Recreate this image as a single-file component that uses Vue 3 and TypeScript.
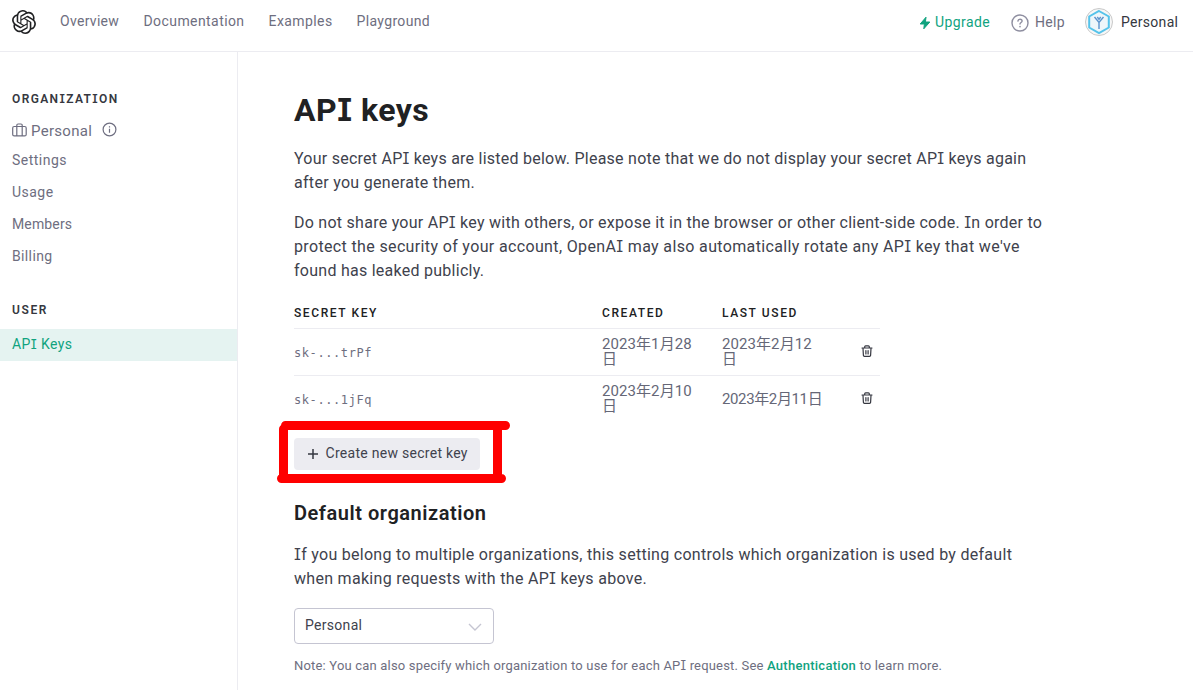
<script setup lang="ts">
interface NavLink { label: string; cls: string }
interface SecretKey { token: string; created: string; lastUsed: string; compact: boolean }

const nav: NavLink[] = [
  { label: 'Overview', cls: 'w-overview' },
  { label: 'Documentation', cls: 'w-docs' },
  { label: 'Examples', cls: 'w-examples' },
  { label: 'Playground', cls: 'w-play' },
]
const orgLinks: string[] = ['Settings', 'Usage', 'Members', 'Billing']
const keys: SecretKey[] = [
  { token: 'sk-...trPf', created: '2023年1月28日', lastUsed: '2023年2月12日', compact: false },
  { token: 'sk-...1jFq', created: '2023年2月10日', lastUsed: '2023年2月11日', compact: true },
]
</script>

<template>
  <div class="page">
    <header class="topbar">
      <svg class="logo" viewBox="0 0 24 24" width="24" height="24"><path fill="#202123" d="M22.2819 9.8211a5.9847 5.9847 0 0 0-.5157-4.9108 6.0462 6.0462 0 0 0-6.5098-2.9A6.0651 6.0651 0 0 0 4.9807 4.1818a5.9847 5.9847 0 0 0-3.9977 2.9 6.0462 6.0462 0 0 0 .7427 7.0966 5.98 5.98 0 0 0 .511 4.9107 6.051 6.051 0 0 0 6.5146 2.9001A5.9847 5.9847 0 0 0 13.2599 24a6.0557 6.0557 0 0 0 5.7718-4.2058 5.9894 5.9894 0 0 0 3.9977-2.9001 6.0557 6.0557 0 0 0-.7475-7.0729zm-9.022 12.6081a4.4755 4.4755 0 0 1-2.8764-1.0408l.1419-.0804 4.7783-2.7582a.7948.7948 0 0 0 .3927-.6813v-6.7369l2.02 1.1686a.071.071 0 0 1 .038.052v5.5826a4.504 4.504 0 0 1-4.4945 4.4944zm-9.6607-4.1254a4.4708 4.4708 0 0 1-.5346-3.0137l.142.0852 4.783 2.7582a.7712.7712 0 0 0 .7806 0l5.8428-3.3685v2.3324a.0804.0804 0 0 1-.0332.0615L9.74 19.9502a4.4992 4.4992 0 0 1-6.1408-1.6464zM2.3408 7.8956a4.485 4.485 0 0 1 2.3655-1.9728V11.6a.7664.7664 0 0 0 .3879.6765l5.8144 3.3543-2.0201 1.1685a.0757.0757 0 0 1-.071 0l-4.8303-2.7865A4.504 4.504 0 0 1 2.3408 7.872zm16.5963 3.8558L13.1038 8.364 15.1192 7.2a.0757.0757 0 0 1 .071 0l4.8303 2.7913a4.4944 4.4944 0 0 1-.6765 8.1042v-5.6772a.79.79 0 0 0-.407-.667zm2.0107-3.0231l-.142-.0852-4.7735-2.7818a.7759.7759 0 0 0-.7854 0L9.409 9.2297V6.8974a.0662.0662 0 0 1 .0284-.0615l4.8303-2.7866a4.4992 4.4992 0 0 1 6.6802 4.66zM8.3065 12.863l-2.02-1.1638a.0804.0804 0 0 1-.038-.0567V6.0742a4.4992 4.4992 0 0 1 7.3757-3.4537l-.142.0805L8.704 5.459a.7948.7948 0 0 0-.3927.6813zm1.0976-2.3654l2.602-1.4998 2.6069 1.4998v2.9994l-2.5974 1.4997-2.6067-1.4997Z" /></svg>
      <nav class="nav"><a v-for="n in nav" :key="n.label" :class="n.cls">{{ n.label }}</a></nav>
      <div class="account">
        <svg class="bolt" viewBox="0 0 12 14" width="12" height="14"><path fill="#10a37f" stroke="#10a37f" stroke-width="1" stroke-linejoin="round" d="M7 1.200 1.200 8h4.200l-.6 4.800L10.800 6H6.400z" /></svg>
        <a class="upgrade">Upgrade</a>
        <svg class="help-icon" viewBox="0 0 18 18" width="18" height="18" fill="none" stroke="#8e8ea0" stroke-width="1.4" stroke-linecap="round"><circle cx="9" cy="9" r="8" /><path d="M6.9 7.1c.1-1.2 1-1.9 2.1-1.9s2.1.7 2.1 1.8c0 1.4-2.1 1.6-2.1 3.1" /><path d="M9 12.6v.1" stroke-width="1.6" /></svg>
        <a class="help">Help</a>
        <svg class="avatar" viewBox="0 0 28 28" width="28" height="28" fill="none"><circle cx="14" cy="14" r="13.5" fill="#f7f7f7" stroke="#c8c8c8" /><path d="M14 3 23.800 8.500v11L14 25l-9.800-5.500v-11z" stroke="#55c3ea" stroke-width="2" fill="#eef6fa" /><path d="M9.500 9 14 14.500 18.500 9M12.300 9l1.700 2.300L15.700 9M14 14v7" stroke="#5b93cc" stroke-width="1.400" /></svg>
        <span class="who">Personal</span>
      </div>
    </header>

    <div class="body">
      <aside class="sidebar">
        <h3>ORGAN<span class="si">I</span>ZAT<span class="si">I</span>ON</h3>
        <div class="org">
          <svg viewBox="0 0 15 14" width="15" height="14" fill="none" stroke="#6e6e80" stroke-width="1.2"><rect x=".7" y="3.500" width="13.500" height="9.400" rx="1.500" /><path d="M4.800 12.900V2.200a1.200 1.200 0 0 1 1.200-1.200h3a1.200 1.200 0 0 1 1.200 1.200v10.700" /></svg>
          <span>Personal</span>
          <svg class="info" viewBox="0 0 15 15" width="15" height="15" fill="none" stroke="#6e6e80" stroke-width="1.200"><circle cx="7.500" cy="7.500" r="6.400" /><path d="M7.500 6.700v4M7.500 4.200v1.200" /></svg>
        </div>
        <a v-for="l in orgLinks" :key="l" class="side-link" :class="'s-' + l.toLowerCase()">{{ l }}</a>
        <h3 class="user">USER</h3>
        <a class="side-link active">AP<span class="si">I</span> Keys</a>
      </aside>

      <main class="main">
        <h1>AP<span class="si">I</span> keys</h1>
        <p class="para">
          <span class="line p1">Your secret AP<span class="si">I</span> keys are listed below. Please note that we do not display your secret AP<span class="si">I</span> keys again</span>
          <span class="line">after you generate them.</span>
        </p>
        <p class="para">
          <span class="line p2">Do not share your AP<span class="si">I</span> key with others, or expose it in the browser or other client-side code. <span class="si">I</span>n order to</span>
          <span class="line p3">protect the security of your account, OpenA<span class="si">I</span> may also automatically rotate any AP<span class="si">I</span> key that we've</span>
          <span class="line p-found">found has leaked publicly.</span>
        </p>
        <table>
          <thead><tr><th class="c-key">SECRET KEY</th><th class="c-date">CREATED</th><th class="c-date">LAST USED</th><th></th></tr></thead>
          <tbody>
            <tr v-for="k in keys" :key="k.token">
              <td class="token">{{ k.token }}</td>
              <td class="date">{{ k.created }}</td>
              <td class="date" :class="{ compact: k.compact }">{{ k.lastUsed }}</td>
              <td class="trash"><svg viewBox="0 0 12 12" width="12" height="12" fill="none" stroke="#353740" stroke-width="1.200" stroke-linejoin="round" stroke-linecap="round"><path d="M1 3h10M3.700 3V1.700q0-.9.900-.9h2.800q.9 0 .9.900V3M2 3.200l.4 7.200q.1.900 1 .9h5.200q.9 0 1-.9l.4-7.200M4.900 5.500v3.500M7.100 5.500v3.500" /></svg></td>
            </tr>
          </tbody>
        </table>
        <div class="create-wrap">
          <button class="create"><svg viewBox="0 0 10 10" width="10" height="10"><path d="M5 0v10M0 5h10" stroke="#353740" stroke-width="1.500" /></svg><span>Create new secret key</span></button>
          <svg class="marker" viewBox="0 0 240 70" width="240" height="70" fill="none" stroke="#f00" stroke-width="9" stroke-linecap="round"><path d="M15.500 10.500H235.500M13.500 14V60M227.500 12V62M11.500 63.500H231.500" /></svg>
        </div>
        <h2>Default organization</h2>
        <p class="para">
          <span class="line p4"><span class="si">I</span>f you belong to multiple organizations, this setting controls which organization is used by default</span>
          <span class="line">when making requests with the AP<span class="si">I</span> keys above.</span>
        </p>
        <div class="select"><span>Personal</span><svg viewBox="0 0 14 8" width="14" height="8" fill="none" stroke="#c5c5d2" stroke-width="1.400"><path d="m1 1 6 6 6-6" /></svg></div>
        <p class="note">Note: You can also specify which organization to use for each AP<span class="si">I</span> request. See <a>Authentication</a> to learn more.</p>
      </main>
    </div>
  </div>
</template>

<style>
html, body { margin: 0; background: #fff; overflow: hidden; }
</style>
<style scoped>
.page { width: 1193px; height: 690px; overflow: hidden; font-family: Roboto, "Noto Sans CJK SC", sans-serif; font-size: 14px; letter-spacing: .3px; color: #40424d; display: flex; flex-direction: column; }
.si { font-family: Inter, sans-serif; font-feature-settings: "cv08"; font-size: .97em; line-height: 0; }
.topbar { box-sizing: border-box; flex: none; height: 52px; border-bottom: 1px solid #ececf1; display: flex; align-items: flex-start; padding: 10px 15px 0 12px; color: #6e6e80; line-height: 20px; }
.logo { flex: none; }
.nav { display: flex; gap: 24px; margin: 1px 0 0 24px; white-space: nowrap; }
.nav a { display: block; }
.w-overview { width: 59.500px; }
.w-docs { width: 101px; letter-spacing: .42px; }
.w-examples { width: 64px; letter-spacing: .42px; }
.w-play { letter-spacing: .35px; }
.account { margin-left: auto; display: flex; white-space: nowrap; line-height: 24px; }
.bolt { margin: 6px 4px 0 0; }
.upgrade { color: #10a37f; width: 55px; letter-spacing: .42px; }
.help-icon { margin: 4px 6px 0 21px; }
.help { width: 30px; }
.avatar { margin: -2px 8px 0 20px; }
.who { color: #353740; width: 57px; }
.body { flex: 1; display: flex; min-height: 0; }
.sidebar { box-sizing: border-box; width: 238px; flex: none; border-right: 1px solid #ececf1; padding-top: 37px; color: #6e6e80; }
h3 { margin: 0; padding-left: 12px; font-size: 12px; line-height: 20px; font-weight: 600; letter-spacing: 1.370px; color: #353740; }
.org { display: flex; align-items: center; padding-left: 12px; height: 24px; margin-top: 9px; font-size: 15px; }
.org span { margin: 1px 10px 0 4px; width: 61px; }
.org svg { margin-top: -1px; }
.org .info { margin-top: -1px; }
.side-link { display: block; padding-left: 12px; height: 32px; line-height: 30px; }
.org + .side-link { margin-top: 3px; }
.s-settings, .s-usage { letter-spacing: .480px; }
.s-members { letter-spacing: .140px; }
.s-billing { letter-spacing: .360px; }
.user { margin: 27px 0 9px; letter-spacing: 1.600px; }
.active { background: #e5f3f1; color: #10a37f; letter-spacing: .380px; }
.main { padding: 0 0 0 56px; width: 760px; }
h1 { margin: 38px 0 0; font-size: 32px; line-height: 40px; font-weight: 700; letter-spacing: .5px; color: #202123; }
.para { margin: 0; font-size: 16px; line-height: 24px; white-space: nowrap; }
h1 + .para { margin: 17px 0 16px; }
.line { display: block; }
.p1 { letter-spacing: .245px; }
.p2 { letter-spacing: .260px; }
.p3 { letter-spacing: .355px; }
.p4 { letter-spacing: .285px; }
.p-found { letter-spacing: .260px; }
table { margin-top: 17px; width: 586px; border-collapse: separate; border-spacing: 0; table-layout: fixed; }
th { box-sizing: border-box; height: 29px; padding: 0 0 2px; text-align: left; font-size: 12px; line-height: 16px; font-weight: 500; letter-spacing: 1.600px; color: #202123; vertical-align: middle; border-bottom: 1px solid #ececf1; }
.c-key { width: 308px; }
.c-date { width: 120px; }
td { box-sizing: border-box; height: 47px; padding: 0; border-bottom: 1px solid #ececf1; vertical-align: middle; color: #6e6e80; }
tr:last-child td { border-bottom-color: transparent; }
.token { font: 12px/16px "DejaVu Sans Mono", monospace; letter-spacing: .580px; padding-top: 1px; }
.date { font-size: 15px; line-height: 15px; letter-spacing: .080px; padding-right: 20px; color: #656777; }
.compact { letter-spacing: -.370px; white-space: nowrap; }
.trash { text-align: right; padding: 0 7px 2px 0; line-height: 0; }
.create-wrap { position: relative; margin-top: 15px; height: 32px; }
.create { display: flex; align-items: center; width: 186px; height: 32px; border: 0; border-radius: 4px; background: #ececf1; padding: 0 0 0 14px; font: inherit; letter-spacing: .280px; color: #40424d; white-space: nowrap; }
.create span { margin: -2px 0 0 7.500px; }
.marker { position: absolute; left: -24px; top: -23px; }
h2 { margin: 31px 0 18px; font-size: 20px; line-height: 24px; font-weight: 600; letter-spacing: .540px; color: #202123; }
.select { box-sizing: border-box; width: 200px; height: 36px; margin-top: 17px; border: 1px solid #c5c5d2; border-radius: 4px; display: flex; align-items: center; justify-content: space-between; padding: 0 11px 2px 10px; }
.select svg { margin-top: 3px; }
.note { margin: 12px 0 0; font-size: 13px; line-height: 20px; letter-spacing: .185px; color: #6e6e80; white-space: nowrap; }
.note a { color: #10a37f; font-weight: 500; letter-spacing: .270px; }
</style>
